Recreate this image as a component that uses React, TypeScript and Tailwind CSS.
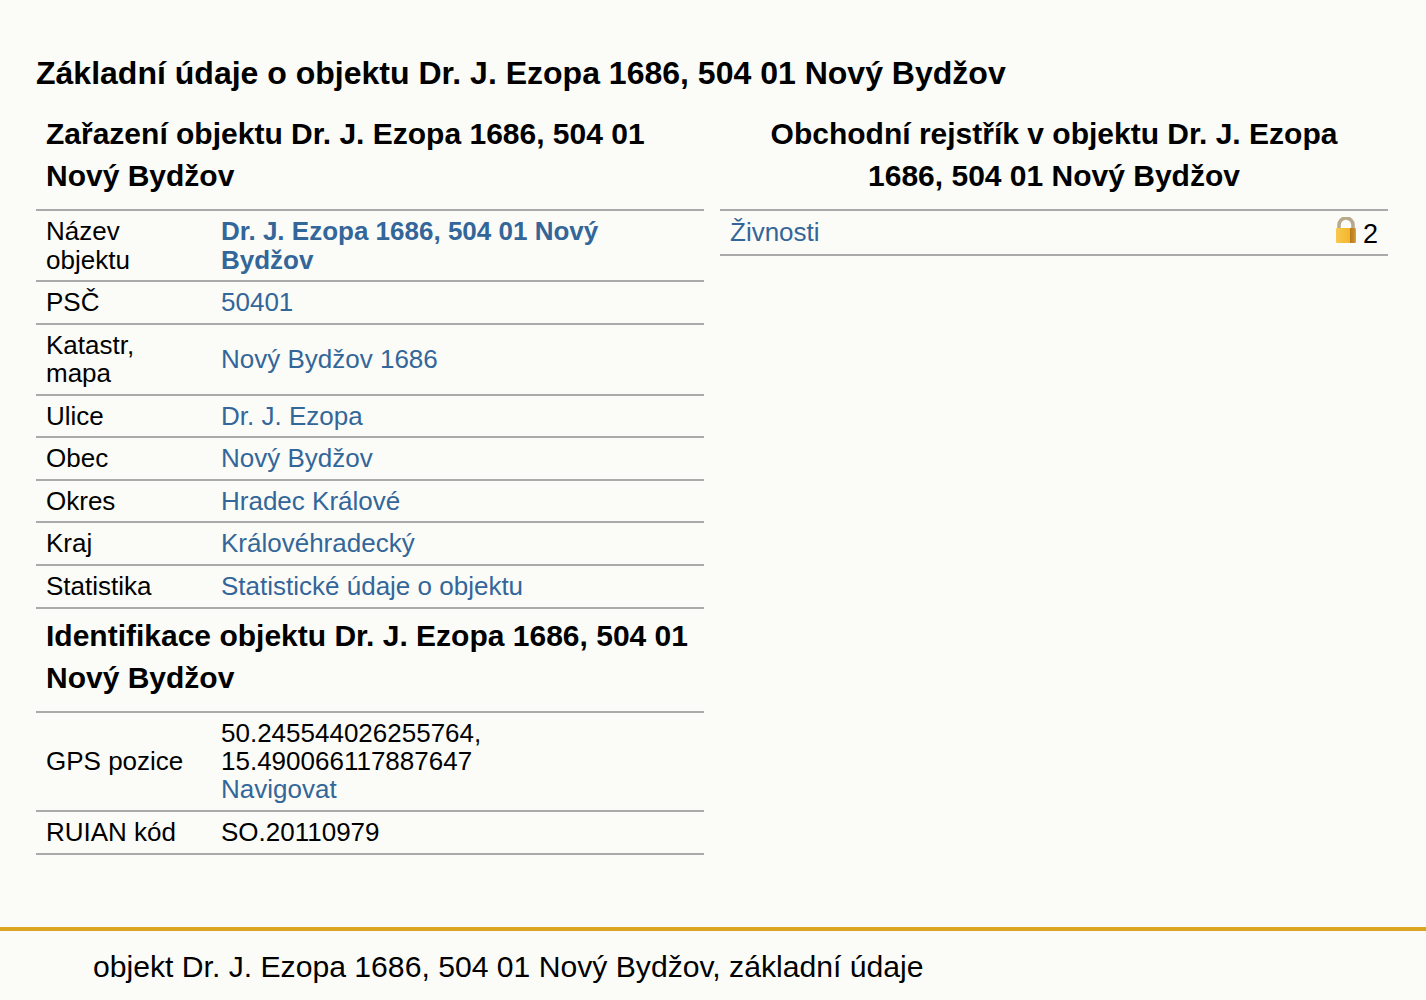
const link = "text-[#369]";

function Row({ label, children }: { label: React.ReactNode; children: React.ReactNode }) {
  return (
    <div className="grid grid-cols-[175px_1fr] items-center border-b-2 border-[#aaaaaa] pl-[10px] pr-[10px] py-[6.1px]">
      <div>{label}</div>
      <div>{children}</div>
    </div>
  );
}

function H2({ children, center }: { children: React.ReactNode; center?: boolean }) {
  return (
    <h2 className={`font-bold text-[30px] leading-[42px] px-[10px] ${center ? "text-center" : ""}`}>{children}</h2>
  );
}

export default function App() {
  return (
    <div
      className="min-h-[1000px] bg-[#fbfcf8] text-black text-[26px] leading-[28.4px]"
      style={{ fontFamily: '"Liberation Sans", Arial, sans-serif' }}
    >
      <div className="px-[36px] pt-[51px] h-[927px]">
        <h1 className="font-bold text-[32.03px] leading-[44px]">Základní údaje o objektu Dr. J. Ezopa 1686, 504 01 Nový Bydžov</h1>
        <div className="grid grid-cols-[668px_668px] gap-x-[16px] mt-[18px]">
          <div>
            <H2>Zařazení objektu Dr. J. Ezopa 1686, 504 01 Nový Bydžov</H2>
            <div className="mt-[12px] border-t-2 border-[#aaaaaa]">
              <Row label={<>Název<br />objektu</>}>
                <span className={`${link} font-bold`}>Dr. J. Ezopa 1686, 504 01 Nový Bydžov</span>
              </Row>
              <Row label="PSČ"><span className={link}>50401</span></Row>
              <Row label={<>Katastr,<br />mapa</>}><span className={link}>Nový Bydžov 1686</span></Row>
              <Row label="Ulice"><span className={link}>Dr. J. Ezopa</span></Row>
              <Row label="Obec"><span className={link}>Nový Bydžov</span></Row>
              <Row label="Okres"><span className={link}>Hradec Králové</span></Row>
              <Row label="Kraj"><span className={link}>Královéhradecký</span></Row>
              <Row label="Statistika"><span className={link}>Statistické údaje o objektu</span></Row>
            </div>
            <div className="mt-[6px]">
              <H2>Identifikace objektu Dr. J. Ezopa 1686, 504 01 Nový Bydžov</H2>
            </div>
            <div className="mt-[12px] border-t-2 border-[#aaaaaa]">
              <Row label="GPS pozice">
                50.245544026255764,<br />15.490066117887647<br />
                <span className={link}>Navigovat</span>
              </Row>
              <Row label="RUIAN kód">SO.20110979</Row>
            </div>
          </div>
          <div>
            <H2 center>Obchodní rejstřík v objektu Dr. J. Ezopa 1686, 504 01 Nový Bydžov</H2>
            <div className="mt-[12px] border-t-2 border-b-2 border-[#aaaaaa] flex items-center justify-between px-[10px] h-[47px]">
              <span className={link}>Živnosti</span>
              <span className="flex items-center gap-[7px]">
                <svg width="20" height="26" viewBox="0 0 20 26" aria-hidden="true" className="mb-[6px]">
                  <defs>
                    <linearGradient id="lockBody" x1="0" x2="1" y1="0" y2="0">
                      <stop offset="0" stopColor="#f7c94f" />
                      <stop offset="0.68" stopColor="#f5b52e" />
                      <stop offset="0.72" stopColor="#b97b20" />
                      <stop offset="0.9" stopColor="#c98c2b" />
                      <stop offset="1" stopColor="#e0a83c" />
                    </linearGradient>
                  </defs>
                  <path d="M3 13V8a6.5 6.5 0 0 1 14 0V13" fill="none" stroke="#b8a88c" strokeWidth="3.5" />
                  <rect x="0" y="11" width="20" height="15" rx="1" fill="url(#lockBody)" />
                </svg>
                <span className="text-[27px] relative top-[2px]">2</span>
              </span>
            </div>
          </div>
        </div>
      </div>
      <div className="border-t-4 border-[#daa520] pl-[93px] pt-[18px] text-[30.15px] leading-[36px]">
        objekt Dr. J. Ezopa 1686, 504 01 Nový Bydžov, základní údaje
      </div>
    </div>
  );
}
